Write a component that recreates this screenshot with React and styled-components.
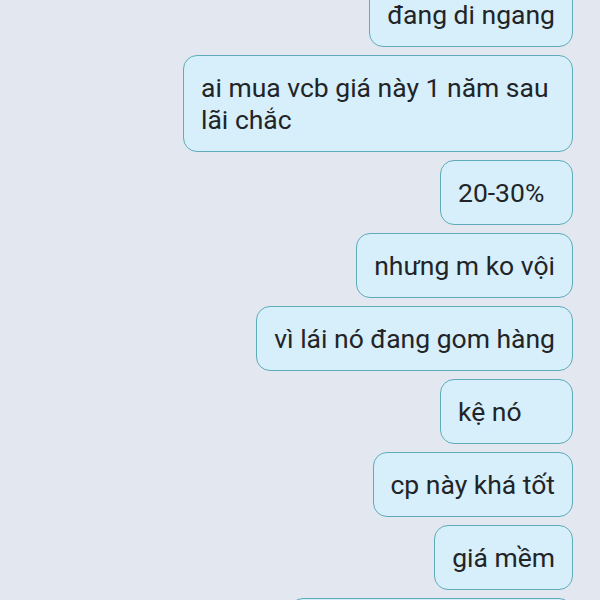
import React from "react";
import styled, { createGlobalStyle } from "styled-components";

const Global = createGlobalStyle`
  html, body {
    margin: 0;
    padding: 0;
    background: #e3e8f0;
    overflow: hidden;
  }
  body {
    font-family: Roboto, "Noto Sans", "Liberation Sans", sans-serif;
  }
`;

const Screen = styled.div`
  width: 600px;
  height: 600px;
  overflow: hidden;
  background: #e3e8f0;
`;

const Thread = styled.div`
  display: flex;
  flex-direction: column;
  align-items: flex-end;
  gap: 8px;
  padding-right: 27px;
  margin-top: -18px;
`;

const Bubble = styled.div`
  box-sizing: border-box;
  min-width: 133px;
  max-width: 390px;
  padding: 15.5px 17px;
  background: #d6effa;
  border: 1px solid #5eabba;
  border-radius: 14px;
  color: #222428;
  font-size: 26.5px;
  line-height: 32px;
`;

const messages = [
  "đang di ngang",
  "ai mua vcb giá này 1 năm sau lãi chắc",
  "20-30%",
  "nhưng m ko vội",
  "vì lái nó đang gom hàng",
  "kệ nó",
  "cp này khá tốt",
  "giá mềm",
  "lái nó gom thì cứ giữ.",
];

export default function App() {
  return (
    <Screen>
      <Global />
      <Thread>
        {messages.map((m, i) => (
          <Bubble key={i}>{m}</Bubble>
        ))}
      </Thread>
    </Screen>
  );
}
